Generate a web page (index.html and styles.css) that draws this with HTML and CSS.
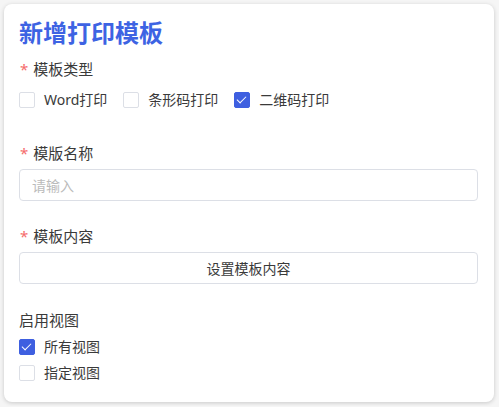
FILE: index.html
```html
<!DOCTYPE html>
<html lang="zh-CN">
<head>
    <meta charset="UTF-8">
    <meta name="viewport" content="width=device-width, initial-scale=1.0">
    <title>新增打印模板</title>
    <link rel="stylesheet" href="styles.css">
</head>
<body>

<div class="card">
    <h2 class="title">新增打印模板</h2>

    <!-- 模板类型 -->
    <div class="form-item type-item">
        <div class="label required">模板类型</div>
        <div class="check-row">
            <label class="check"><span class="box"></span>Word打印</label>
            <label class="check"><span class="box"></span>条形码打印</label>
            <label class="check checked"><span class="box"></span>二维码打印</label>
        </div>
    </div>

    <!-- 模版名称 -->
    <div class="form-item name-item">
        <div class="label required">模版名称</div>
        <input class="input" type="text" placeholder="请输入">
    </div>

    <!-- 模板内容 -->
    <div class="form-item content-item">
        <div class="label required">模板内容</div>
        <button class="button">设置模板内容</button>
    </div>

    <!-- 启用视图 -->
    <div class="form-item view-item">
        <div class="label">启用视图</div>
        <div class="check-list">
            <label class="check checked"><span class="box"></span>所有视图</label>
            <label class="check"><span class="box"></span>指定视图</label>
        </div>
    </div>
</div>

</body>
</html>
```

FILE: styles.css
```css
body {
    font-family: "Noto Sans", "Noto Sans CJK SC", sans-serif;
    margin: 0;
    padding: 4px;
    background-color: #f5f5f5;
    color: #3a3a3a;
}

.card {
    width: 459px;
    height: 387px;
    padding: 11px 16px 0 15px;
    background-color: #fff;
    border-radius: 8px;
    box-shadow: 0 1px 4px rgba(0, 0, 0, 0.18);
}

.title {
    margin: 0;
    font-size: 24px;
    line-height: 36px;
    font-weight: bold;
    color: #3d63e3;
}

.label {
    font-size: 15px;
    line-height: 22px;
    color: #3a3a3a;
}

.required::before {
    content: "*";
    color: #f56c6c;
    margin-right: 5px;
    margin-left: 1px;
}

.type-item {
    margin-top: 7px;
}

.check-row {
    display: flex;
    margin-top: 9px;
}

.check-row .check {
    margin-right: 16px;
}

.check {
    display: flex;
    align-items: center;
    font-size: 14px;
    line-height: 22px;
    color: #3a3a3a;
}

.box {
    width: 14px;
    height: 14px;
    border: 1px solid #dcdfe6;
    border-radius: 2px;
    margin-right: 9px;
    position: relative;
    background-color: #fff;
}

.checked .box {
    background-color: #3e5fe0;
    border-color: #3e5fe0;
}

.checked .box::after {
    content: "";
    position: absolute;
    left: 4px;
    top: 1px;
    width: 4px;
    height: 8px;
    border: solid #fff;
    border-width: 0 1.5px 1.5px 0;
    transform: rotate(45deg);
}

.name-item {
    margin-top: 31px;
}

.input {
    display: block;
    box-sizing: border-box;
    width: 100%;
    height: 32px;
    margin-top: 5px;
    padding: 0 12px;
    border: 1px solid #dcdfe6;
    border-radius: 4px;
    font-family: inherit;
    font-size: 14px;
    color: #3a3a3a;
    outline: none;
}

.input::placeholder {
    color: #bbb;
}

.content-item {
    margin-top: 24px;
}

.button {
    display: block;
    width: 100%;
    height: 32px;
    margin-top: 5px;
    border: 1px solid #dcdfe6;
    border-radius: 4px;
    background-color: #fff;
    font-family: inherit;
    font-size: 14px;
    color: #3a3a3a;
    cursor: pointer;
}

.view-item {
    margin-top: 25px;
}

.check-list {
    margin-top: 5px;
}

.check-list .check + .check {
    margin-top: 4px;
}
```
